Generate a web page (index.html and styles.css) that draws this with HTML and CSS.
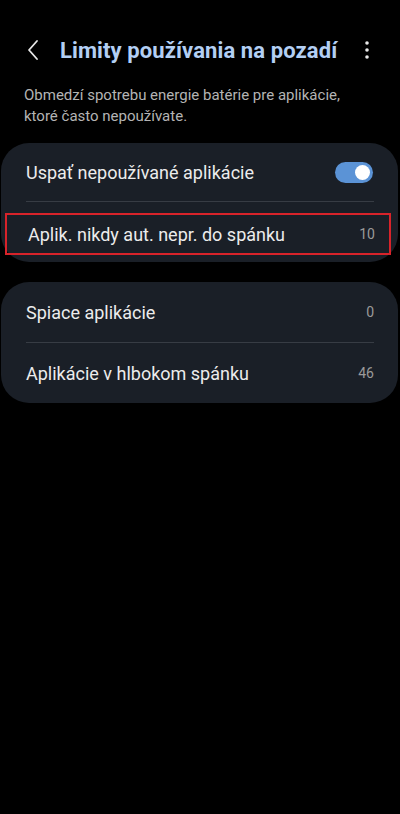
FILE: index.html
```html
<html>
  <head>
    <title>Limity používania na pozadí</title>
    <link rel="stylesheet" href="styles.css">
  </head>
  <body>
    <div class="topbar">
      <svg class="back" width="14" height="22" viewBox="0 0 14 22">
        <path d="M11 2 L3 11 L11 20" fill="none" stroke="#e8e8e8" stroke-width="1.8" stroke-linecap="round" stroke-linejoin="round"/>
      </svg>
      <h1 class="title">Limity používania na pozadí</h1>
      <svg class="more" width="6" height="20" viewBox="0 0 6 20">
        <circle cx="3" cy="3" r="1.8" fill="#e8e8e8"/>
        <circle cx="3" cy="10" r="1.8" fill="#e8e8e8"/>
        <circle cx="3" cy="17" r="1.8" fill="#e8e8e8"/>
      </svg>
    </div>

    <p class="desc">Obmedzí spotrebu energie batérie pre aplikácie, ktoré často nepoužívate.</p>

    <div class="card">
      <div class="row">
        <span class="label">Uspať nepoužívané aplikácie</span>
        <span class="switch"><span class="knob"></span></span>
      </div>
      <div class="divider"></div>
      <div class="row marked">
        <span class="label">Aplik. nikdy aut. nepr. do spánku</span>
        <span class="count">10</span>
      </div>
    </div>

    <div class="card second">
      <div class="row">
        <span class="label">Spiace aplikácie</span>
        <span class="count">0</span>
      </div>
      <div class="divider"></div>
      <div class="row">
        <span class="label">Aplikácie v hlbokom spánku</span>
        <span class="count">46</span>
      </div>
    </div>
  </body>
</html>
```

FILE: styles.css
```css
body {
  margin: 0;
  background-color: #000;
  font-family: Roboto, "Noto Sans", sans-serif;
  color: #ececec;
  width: 400px;
  height: 814px;
}

.topbar {
  display: flex;
  align-items: center;
  height: 44px;
  margin-top: 28px;
  padding: 0 30px 0 26px;
}
.back {
  flex: none;
}
.title {
  flex: 1;
  margin: 0 0 0 20px;
  font-size: 22px;
  font-weight: 700;
  color: #b3cff4;
  letter-spacing: 0.1px;
}
.more {
  flex: none;
}

.desc {
  margin: 13px 50px 16px 24px;
  font-size: 15px;
  line-height: 21px;
  color: #b4b4b4;
}

.card {
  display: flex;
  flex-direction: column;
  background-color: #1a1f27;
  border-radius: 28px;
  margin: 0 2px 20px 1px;
}

.row {
  display: flex;
  align-items: center;
  justify-content: space-between;
  height: 58px;
  padding: 0 25px 0 25px;
  box-sizing: border-box;
}
.second .row {
  height: 60px;
  padding-right: 24px;
}
.label {
  font-size: 18px;
}
.count {
  font-size: 14px;
  color: #9a9a9a;
}

.divider {
  height: 1px;
  background-color: #373c44;
  margin: 0 24px 0 25px;
}

.marked {
  height: 42px;
  margin: 11px 7px 7px 4px;
  padding: 0 14px 0 21px;
  border: 2px solid #d8232a;
}

.switch {
  position: relative;
  width: 38px;
  height: 21px;
  border-radius: 11px;
  background-color: #5b93d6;
}
.knob {
  position: absolute;
  right: 3px;
  top: 3px;
  width: 15px;
  height: 15px;
  border-radius: 50%;
  background-color: #fff;
}
```
